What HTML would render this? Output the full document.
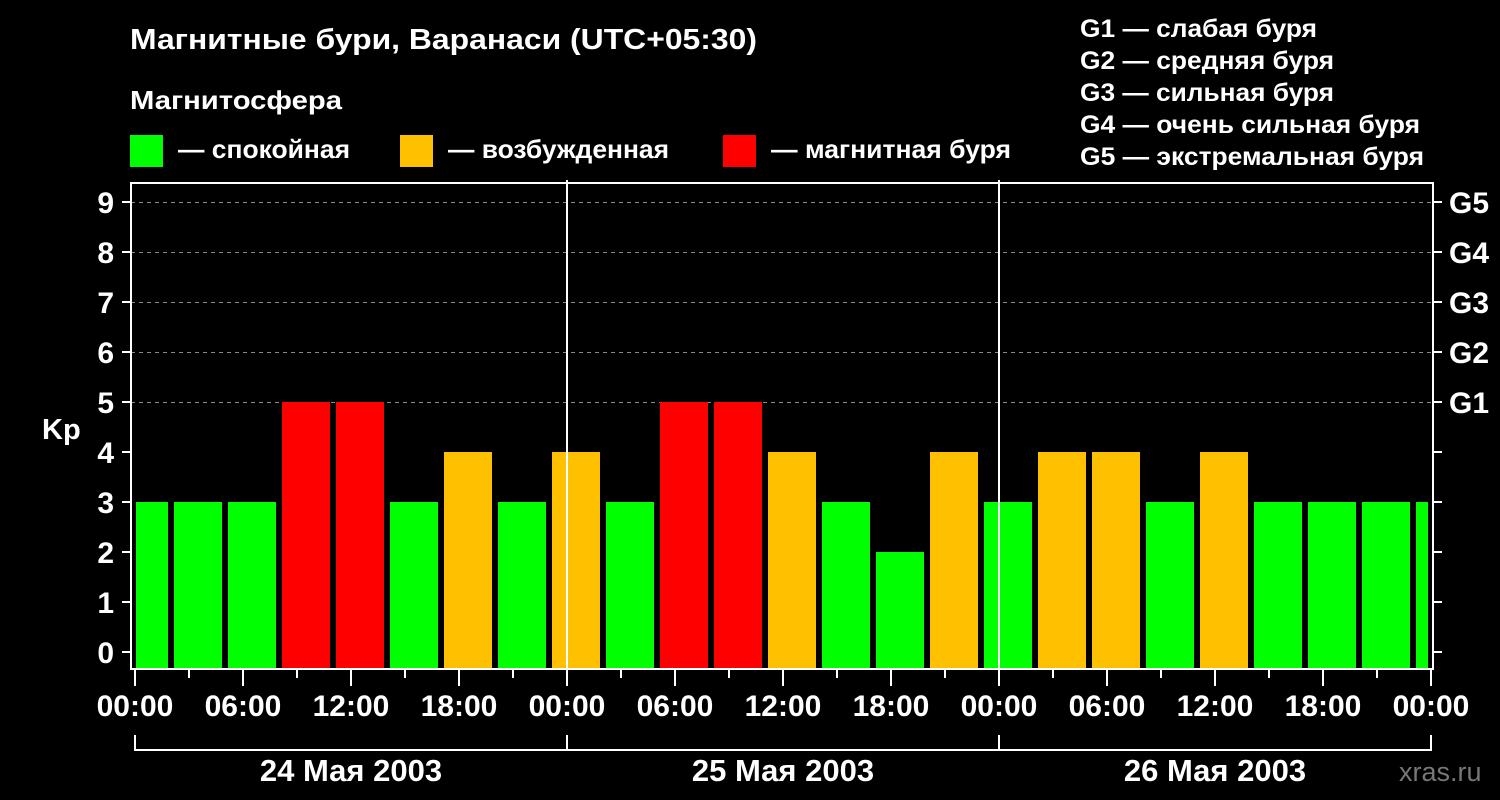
<!DOCTYPE html>
<html><head><meta charset="utf-8"><style>html,body{margin:0;padding:0;background:#000;}svg{display:block}</style></head>
<body>
<svg width="1500" height="800" xmlns="http://www.w3.org/2000/svg" font-family="Liberation Sans, Arial, sans-serif" font-weight="bold" fill="#fff">
<rect width="1500" height="800" fill="#000"/>
<text x="130" y="49" font-size="29" textLength="627" lengthAdjust="spacingAndGlyphs">Магнитные бури, Варанаси (UTC+05:30)</text>
<text x="130" y="109" font-size="26" textLength="212" lengthAdjust="spacingAndGlyphs">Магнитосфера</text>
<rect x="130" y="135" width="33" height="32" fill="#00ff00"/>
<text x="178" y="158" font-size="26" textLength="172" lengthAdjust="spacingAndGlyphs">— спокойная</text>
<rect x="400" y="135" width="33" height="32" fill="#ffc000"/>
<text x="448" y="158" font-size="26" textLength="221" lengthAdjust="spacingAndGlyphs">— возбужденная</text>
<rect x="723" y="135" width="33" height="32" fill="#ff0000"/>
<text x="771" y="158" font-size="26" textLength="240" lengthAdjust="spacingAndGlyphs">— магнитная буря</text>
<g font-size="25">
<text x="1080" y="37" textLength="237" lengthAdjust="spacingAndGlyphs">G1 — слабая буря</text>
<text x="1080" y="69" textLength="254" lengthAdjust="spacingAndGlyphs">G2 — средняя буря</text>
<text x="1080" y="101" textLength="254" lengthAdjust="spacingAndGlyphs">G3 — сильная буря</text>
<text x="1080" y="133" textLength="340" lengthAdjust="spacingAndGlyphs">G4 — очень сильная буря</text>
<text x="1080" y="165" textLength="344" lengthAdjust="spacingAndGlyphs">G5 — экстремальная буря</text>
</g>
<g stroke="#888" stroke-width="1" stroke-dasharray="4,4">
<line x1="131" y1="202.5" x2="1433" y2="202.5"/>
<line x1="131" y1="252.5" x2="1433" y2="252.5"/>
<line x1="131" y1="302.5" x2="1433" y2="302.5"/>
<line x1="131" y1="352.5" x2="1433" y2="352.5"/>
<line x1="131" y1="402.5" x2="1433" y2="402.5"/>
</g>
<g>
<rect x="136" y="502" width="32" height="166" fill="#00ff00"/>
<rect x="174" y="502" width="48" height="166" fill="#00ff00"/>
<rect x="228" y="502" width="48" height="166" fill="#00ff00"/>
<rect x="282" y="402" width="48" height="266" fill="#ff0000"/>
<rect x="336" y="402" width="48" height="266" fill="#ff0000"/>
<rect x="390" y="502" width="48" height="166" fill="#00ff00"/>
<rect x="444" y="452" width="48" height="216" fill="#ffc000"/>
<rect x="498" y="502" width="48" height="166" fill="#00ff00"/>
<rect x="552" y="452" width="48" height="216" fill="#ffc000"/>
<rect x="606" y="502" width="48" height="166" fill="#00ff00"/>
<rect x="660" y="402" width="48" height="266" fill="#ff0000"/>
<rect x="714" y="402" width="48" height="266" fill="#ff0000"/>
<rect x="768" y="452" width="48" height="216" fill="#ffc000"/>
<rect x="822" y="502" width="48" height="166" fill="#00ff00"/>
<rect x="876" y="552" width="48" height="116" fill="#00ff00"/>
<rect x="930" y="452" width="48" height="216" fill="#ffc000"/>
<rect x="984" y="502" width="48" height="166" fill="#00ff00"/>
<rect x="1038" y="452" width="48" height="216" fill="#ffc000"/>
<rect x="1092" y="452" width="48" height="216" fill="#ffc000"/>
<rect x="1146" y="502" width="48" height="166" fill="#00ff00"/>
<rect x="1200" y="452" width="48" height="216" fill="#ffc000"/>
<rect x="1254" y="502" width="48" height="166" fill="#00ff00"/>
<rect x="1308" y="502" width="48" height="166" fill="#00ff00"/>
<rect x="1362" y="502" width="48" height="166" fill="#00ff00"/>
<rect x="1416" y="502" width="12" height="166" fill="#00ff00"/>
</g>
<g stroke="#fff" stroke-width="2" fill="none">
<path d="M131 183 V669 H1433 V183 Z"/>
<line x1="567" y1="180" x2="567" y2="669"/>
<line x1="999" y1="180" x2="999" y2="669"/>
<path d="M135 735 V750 H1431 V735 M567 735 V750 M999 735 V750"/>
<path d="M122 652H131M122 602H131M122 552H131M122 502H131M122 452H131M122 402H131M122 352H131M122 302H131M122 252H131M122 202H131"/>
<path d="M1433 652H1442M1433 602H1442M1433 552H1442M1433 502H1442M1433 452H1442M1433 402H1442M1433 352H1442M1433 302H1442M1433 252H1442M1433 202H1442"/>
<path d="M135 669V686M189 669V678M243 669V686M297 669V678M351 669V686M405 669V678M459 669V686M513 669V678M567 669V686M621 669V678M675 669V686M729 669V678M783 669V686M837 669V678M891 669V686M945 669V678M999 669V686M1053 669V678M1107 669V686M1161 669V678M1215 669V686M1269 669V678M1323 669V686M1377 669V678M1431 669V686"/>
</g>
<g font-size="30" text-anchor="end">
<text x="114" y="663">0</text><text x="114" y="613">1</text><text x="114" y="563">2</text><text x="114" y="513">3</text><text x="114" y="463">4</text><text x="114" y="413">5</text><text x="114" y="363">6</text><text x="114" y="313">7</text><text x="114" y="263">8</text><text x="114" y="213">9</text>
</g>
<g font-size="30">
<text x="1449" y="413">G1</text><text x="1449" y="363">G2</text><text x="1449" y="313">G3</text><text x="1449" y="263">G4</text><text x="1449" y="213">G5</text>
</g>
<g font-size="30" text-anchor="middle">
<text x="135" y="716">00:00</text><text x="243" y="716">06:00</text><text x="351" y="716">12:00</text><text x="459" y="716">18:00</text>
<text x="567" y="716">00:00</text><text x="675" y="716">06:00</text><text x="783" y="716">12:00</text><text x="891" y="716">18:00</text>
<text x="999" y="716">00:00</text><text x="1107" y="716">06:00</text><text x="1215" y="716">12:00</text><text x="1323" y="716">18:00</text>
<text x="1431" y="716">00:00</text>
</g>
<g font-size="31" text-anchor="middle">
<text x="351" y="781">24 Мая 2003</text><text x="783" y="781">25 Мая 2003</text><text x="1215" y="781">26 Мая 2003</text>
</g>
<text x="42" y="439" font-size="29">Kp</text>
<text x="1399" y="781" font-size="27" fill="#777" font-weight="normal">xras.ru</text>
</svg>
</body></html>
